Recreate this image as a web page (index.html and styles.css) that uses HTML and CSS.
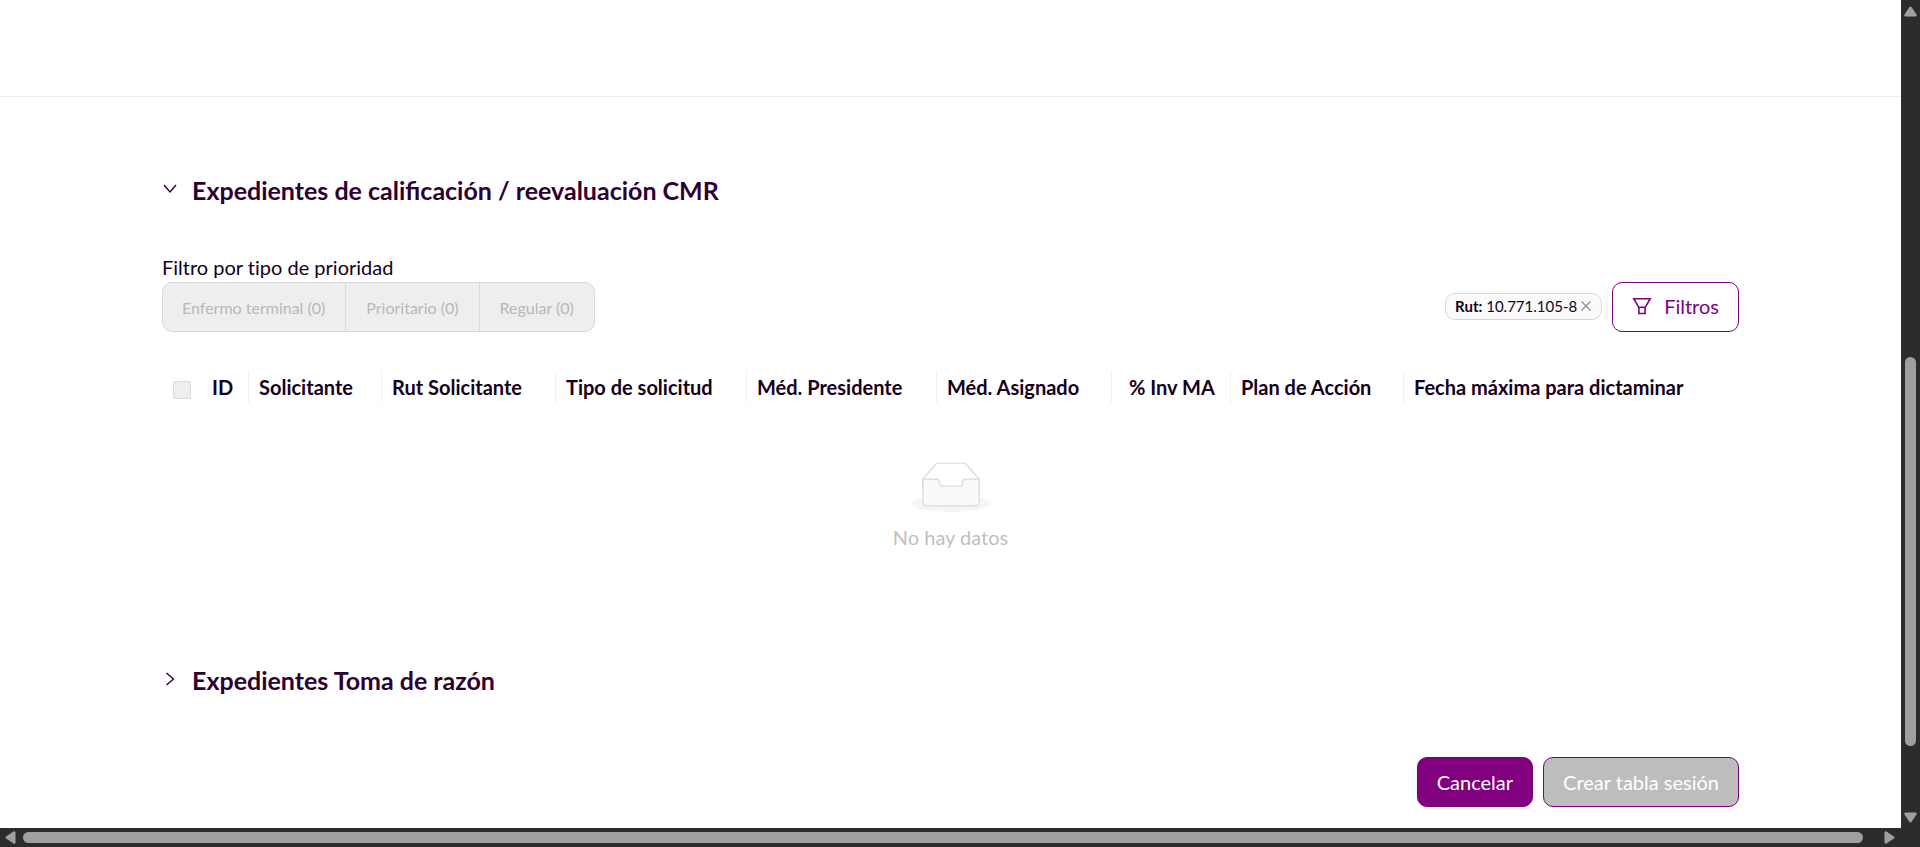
FILE: index.html
```html
<!DOCTYPE html>
<html lang="es">
<head>
<meta charset="utf-8">
<title>Expedientes</title>
<link rel="stylesheet" href="styles.css">
</head>
<body>
<div class="frame">
  <div class="page">
    <header class="topbar"></header>
    <main class="content">
      <section class="panel">
        <button class="panel-toggle" type="button" aria-expanded="true">
          <svg class="chevron" viewBox="0 0 14 14" aria-hidden="true"><path d="M1 3l6 7 6-7"/></svg>
          <span>Expedientes de calificación / reevaluación CMR</span>
        </button>
        <div class="panel-body">
          <div class="toolbar">
            <div class="priority">
              <span class="priority-label" id="priority-label">Filtro por tipo de prioridad</span>
              <div class="segments" role="group" aria-labelledby="priority-label">
                <button type="button" disabled>Enfermo terminal (0)</button>
                <button type="button" disabled>Prioritario (0)</button>
                <button type="button" disabled>Regular (0)</button>
              </div>
            </div>
            <div class="filters">
              <span class="tag"><span><b>Rut:</b> 10.771.105-8</span>
                <button class="tag-close" type="button" aria-label="Quitar filtro"><svg viewBox="0 0 12 12"><path d="M1.500 1.500l9 9M10.500 1.500l-9 9"/></svg></button>
              </span>
              <button class="btn btn-outline" type="button">
                <svg class="funnel" viewBox="0 0 20 20" aria-hidden="true"><path d="M1.800 2.700h16.400l-4.900 8.600H6.700zM6.900 11.300v6.200h6.200v-6.200"/></svg>
                <span>Filtros</span>
              </button>
            </div>
          </div>
          <table class="grid">
            <thead>
              <tr>
                <th class="col-check"><input type="checkbox" disabled aria-label="Seleccionar todo"></th>
                <th class="col-id">ID</th>
                <th class="col-sol">Solicitante</th>
                <th class="col-rut">Rut Solicitante</th>
                <th class="col-tipo">Tipo de solicitud</th>
                <th class="col-pres">Méd. Presidente</th>
                <th class="col-asig">Méd. Asignado</th>
                <th class="col-inv">% Inv MA</th>
                <th class="col-plan">Plan de Acción</th>
                <th>Fecha máxima para dictaminar</th>
              </tr>
            </thead>
            <tbody>
              <tr>
                <td colspan="10">
                  <div class="empty">
                    <svg class="empty-icon" viewBox="0 0 64 41" aria-hidden="true">
                      <g transform="translate(0 1)" fill="none" fill-rule="evenodd">
                        <ellipse fill="#f5f5f5" cx="32" cy="33" rx="32" ry="7"/>
                        <g fill-rule="nonzero" stroke="#d9d9d9">
                          <path d="M55 12.760L44.854 1.258C44.367.474 43.656 0 42.907 0H21.093c-.749 0-1.460.474-1.947 1.257L9 12.761V22h46v-9.240z"/>
                          <path d="M41.613 15.931c0-1.605.994-2.930 2.227-2.931H55v18.137C55 33.260 53.680 35 52.050 35h-40.100C10.320 35 9 33.259 9 31.137V13h11.160c1.233 0 2.227 1.323 2.227 2.928v.022c0 1.605 1.005 2.901 2.237 2.901h14.752c1.232 0 2.237-1.308 2.237-2.913v-.007z" fill="#fafafa"/>
                        </g>
                      </g>
                    </svg>
                    <span>No hay datos</span>
                  </div>
                </td>
              </tr>
            </tbody>
          </table>
        </div>
      </section>
      <section class="panel">
        <button class="panel-toggle" type="button" aria-expanded="false">
          <svg class="chevron" viewBox="0 0 14 14" aria-hidden="true"><path d="M3.500 1l7 6-7 6"/></svg>
          <span>Expedientes Toma de razón</span>
        </button>
      </section>
      <div class="actions">
        <button class="btn btn-primary" type="button">Cancelar</button>
        <button class="btn btn-disabled" type="button" disabled>Crear tabla sesión</button>
      </div>
    </main>
  </div>
  <div class="scroll-v" aria-hidden="true">
    <svg class="arrow" viewBox="0 0 12 12"><path d="M6 3l4 6H2z"/></svg>
    <div class="track-v"><span class="space-before-v"></span><span class="thumb-v"></span><span class="space-after-v"></span></div>
    <svg class="arrow" viewBox="0 0 12 12"><path d="M6 9l4-6H2z"/></svg>
  </div>
  <div class="scroll-h" aria-hidden="true">
    <svg class="arrow" viewBox="0 0 12 12"><path d="M3 6l6-4v8z"/></svg>
    <div class="track-h"><span class="thumb-h"></span></div>
    <svg class="arrow" viewBox="0 0 12 12"><path d="M9 6l-6-4v8z"/></svg>
  </div>
</div>
</body>
</html>
```

FILE: styles.css
```css
* { box-sizing: border-box; }
body { margin: 0; background: #fff; color: #14001a; font-family: Lato, "Open Sans", sans-serif; font-size: 20px; line-height: 32px; font-variant-ligatures: none; }
button { font: inherit; font-variant-ligatures: inherit; margin: 0; }
.frame { display: grid; grid-template-columns: minmax(0, 1fr) 19px; grid-template-rows: minmax(0, 1fr) 19px; height: 100vh; background: #2c2c2c; }
.page { background: #fff; overflow: hidden; }
.topbar { height: 97px; border-bottom: 1px solid #ededed; }
.content { padding: 73px 162px 0; }
.panel-toggle { display: flex; align-items: center; gap: 15px; width: 100%; padding: 0 0 0 1px; border: 0; background: none; color: #2e0030; font-size: 25px; font-weight: 700; line-height: 40px; text-align: left; font-variant-ligatures: normal; }
.chevron { width: 14px; height: 14px; margin-bottom: 3px; fill: none; stroke: currentColor; stroke-width: 1.4; }
.panel-body { padding: 42px 0 107px; }
.toolbar { display: flex; justify-content: space-between; align-items: flex-end; }
.priority-label { display: block; line-height: 30px; }
.segments { display: flex; height: 50px; border: 1px solid #d9d9d9; border-radius: 10px; background: #eee; overflow: hidden; width: max-content; }
.segments button { border: 0; border-right: 1px solid #d9d9d9; background: none; padding: 1px 20px 0; font-size: 16px; color: #b8b8b8; }
.segments button:first-child { padding-left: 19px; }
.segments button:last-child { border-right: 0; }
.filters { display: flex; align-items: center; gap: 10px; }
.tag { display: flex; align-items: center; gap: 3px; height: 27px; margin-bottom: 2px; padding: 0 9px; border: 1px solid #d9d9d9; border-radius: 10px; background: #fafafa; font-size: 15px; line-height: 25px; }
.tag-close { display: flex; padding: 0; border: 0; background: none; color: #8c8c8c; }
.tag-close svg { width: 12px; height: 12px; fill: none; stroke: currentColor; stroke-width: 1.2; }
.btn { display: flex; align-items: center; height: 50px; padding: 0 19px; border: 1px solid #800080; border-radius: 10px; }
.btn-outline { padding-bottom: 3px; background: #fff; color: #800080; gap: 12px; }
.funnel { width: 20px; height: 20px; fill: none; stroke: currentColor; stroke-width: 1.6; }
.btn-primary { background: #800080; color: #fff; }
.btn-disabled { background: #bdbdbd; color: #fff; }
.grid { width: 100%; margin-top: 39px; border-collapse: separate; border-spacing: 0; table-layout: fixed; }
.grid th { padding: 0 0 0 10px; text-align: left; font-weight: 700; white-space: nowrap; border-right: 1px solid #f0f0f0; }
.grid th:last-child { border-right: 0; }
.grid td { padding: 0; }
.grid .col-check { width: 40px; padding-left: 11px; border-right: 0; line-height: 0; }
.col-check input { appearance: none; display: block; width: 18px; height: 18px; margin: 5px 0 0; border: 1px solid #d9d9d9; border-radius: 2px; background: #eee; }
.col-id { width: 47px; }
.col-sol { width: 133px; }
.col-rut { width: 174px; }
.col-tipo { width: 191px; }
.col-pres { width: 190px; }
.col-asig { width: 175px; }
.col-plan { width: 173px; }
.grid .col-inv { width: 119px; padding-left: 17px; }
.empty { display: flex; flex-direction: column; align-items: center; gap: 9px; padding-top: 59px; color: #bfbfbf; }
.empty-icon { width: 78px; height: 50px; }
.actions { display: flex; justify-content: flex-end; gap: 10px; margin-top: 57px; }
.arrow { width: 15px; height: 15px; fill: #9f9f9f; stroke: #9f9f9f; stroke-width: 2; stroke-linejoin: round; }
.scroll-v { display: flex; flex-direction: column; align-items: center; padding: 4px 0 3px; }
.track-v { display: flex; flex-direction: column; flex: 1; }
.space-before-v { flex: 338; }
.thumb-v { flex: 389; width: 11px; border-radius: 6px; background: #9f9f9f; }
.space-after-v { flex: 64; }
.scroll-h { display: flex; align-items: center; padding: 0 4px 0 3px; }
.track-h { flex: 1; padding: 0 19px 0 5px; }
.thumb-h { display: block; height: 11px; border-radius: 6px; background: #9f9f9f; }
```
